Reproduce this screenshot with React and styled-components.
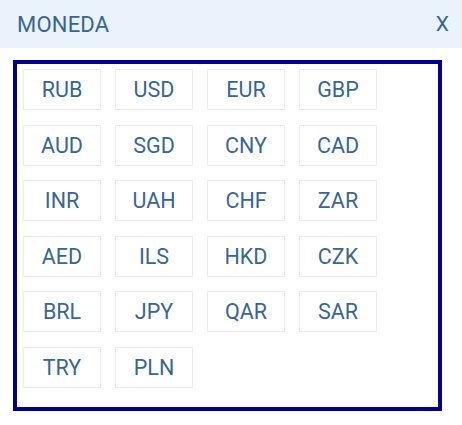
import React from "react";
import styled, { createGlobalStyle } from "styled-components";

const GlobalStyle = createGlobalStyle`
  body {
    margin: 0;
    background: #ffffff;
    font-family: Roboto, "Liberation Sans", sans-serif;
  }
`;

const Header = styled.div`
  display: flex;
  align-items: center;
  justify-content: space-between;
  height: 48px;
  padding: 0 13px 0 17px;
  background-color: #eaf2fb;
  color: #3a6593;
  font-size: 22px;
`;

const Title = styled.div`
  letter-spacing: 0.2px;
`;

const Close = styled.div`
  font-size: 21px;
  cursor: pointer;
`;

const Box = styled.div`
  margin: 12px 0 0 13px;
  width: 429px;
  height: 351px;
  box-sizing: border-box;
  border: 4px solid #00008b;
  padding: 5px 6px;
  display: grid;
  grid-template-columns: repeat(4, 78px);
  grid-auto-rows: 41px;
  column-gap: 14px;
  row-gap: 14.6px;
  align-content: start;
`;

const Currency = styled.div`
  display: flex;
  align-items: center;
  justify-content: center;
  border: 1px solid #ececec;
  color: #3a6593;
  font-size: 21.5px;
  background: #ffffff;
`;

const codes = [
  "RUB", "USD", "EUR", "GBP",
  "AUD", "SGD", "CNY", "CAD",
  "INR", "UAH", "CHF", "ZAR",
  "AED", "ILS", "HKD", "CZK",
  "BRL", "JPY", "QAR", "SAR",
  "TRY", "PLN",
];

export default function App() {
  return (
    <>
      <GlobalStyle />
      <Header>
        <Title>MONEDA</Title>
        <Close>X</Close>
      </Header>
      <Box>
        {codes.map((c) => (
          <Currency key={c}>{c}</Currency>
        ))}
      </Box>
    </>
  );
}
